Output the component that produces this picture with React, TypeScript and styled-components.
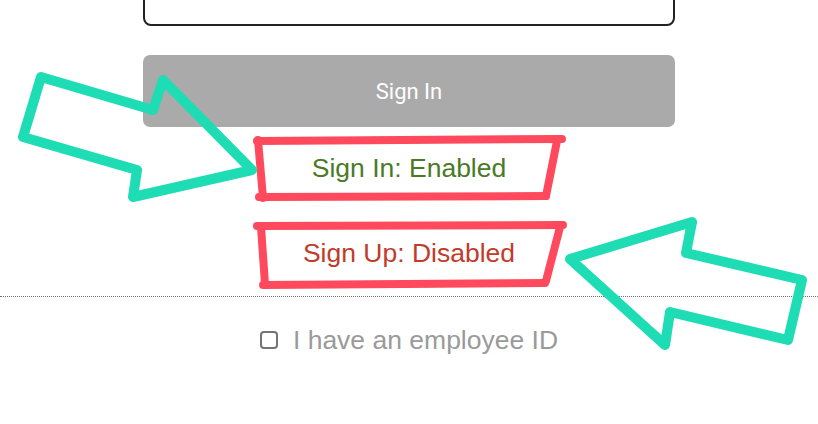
import React from "react";
import styled, { createGlobalStyle } from "styled-components";

const Global = createGlobalStyle`
  html, body { margin: 0; padding: 0; background: #ffffff; }
  body { font-family: "Liberation Sans", Arial, sans-serif; overflow: hidden; }
`;

const Page = styled.div`
  position: relative;
  width: 818px;
  height: 424px;
  overflow: hidden;
  display: flex;
  flex-direction: column;
  background: #fff;
`;

const Column = styled.div`
  width: 532px;
  margin: 0 auto;
  display: flex;
  flex-direction: column;
  align-items: stretch;
`;

const TextInput = styled.input`
  box-sizing: border-box;
  margin: -24px 0 0 0;
  height: 50px;
  width: 100%;
  border: 2px solid #222;
  border-radius: 8px;
  background: #fff;
`;

const SubmitButton = styled.button`
  margin-top: 29px;
  height: 72px;
  border: none;
  border-radius: 7px;
  background: #aaaaaa;
  color: #ffffff;
  font-family: Roboto, "Liberation Sans", sans-serif;
  font-size: 22px;
  cursor: default;
`;

const StatusList = styled.div`
  margin-top: 11px;
  display: flex;
  flex-direction: column;
  gap: 25px;
`;

const Status = styled.div<{ $tone: string }>`
  height: 60px;
  display: flex;
  align-items: center;
  justify-content: center;
  font-family: "Liberation Sans", Arial, sans-serif;
  font-size: 26.5px;
  color: ${(p) => p.$tone};
`;

const Divider = styled.hr`
  margin: 13px 0 0 0;
  border: none;
  border-top: 1px dotted #6f6f6f;
  height: 0;
  width: 100%;
`;

const CheckRow = styled.label`
  margin-top: 23px;
  height: 40px;
  display: flex;
  align-items: center;
  justify-content: center;
  gap: 15px;
  font-family: "Liberation Sans", Arial, sans-serif;
  font-size: 26.5px;
  color: #9a9a9a;
`;

const Box = styled.input`
  appearance: none;
  margin: 0;
  width: 18px;
  height: 18px;
  border: 2px solid #747474;
  border-radius: 4px;
  background: #fff;
  box-sizing: border-box;
`;

const Overlay = styled.svg`
  position: absolute;
  left: 0;
  top: 0;
  pointer-events: none;
`;

const red = "#ff4a5e";
const teal = "#1edcb3";

export default function App() {
  return (
    <>
      <Global />
      <Page>
        <Column>
          <TextInput type="text" />
          <SubmitButton>Sign In</SubmitButton>
          <StatusList>
            <Status $tone="#4b7a26">Sign In: Enabled</Status>
            <Status $tone="#c23b2a">Sign Up: Disabled</Status>
          </StatusList>
        </Column>
        <Divider />
        <Column>
          <CheckRow>
            <Box type="checkbox" />
            I have an employee ID
          </CheckRow>
        </Column>
        <Overlay width="818" height="424" viewBox="0 0 818 424">
          <g fill="none" stroke={red} strokeWidth="8" strokeLinecap="round" strokeLinejoin="round">
            <path d="M257 141 L562 139" />
            <path d="M258 140 L263 198" />
            <path d="M557 141 L546 196" />
            <path d="M259 197 L546 196" />
            <path d="M257 226 L563 225" />
            <path d="M261 227 L265 284" />
            <path d="M560 227 L546 281" />
            <path d="M263 285 L545 283" />
          </g>
          <g fill="none" stroke={teal} strokeWidth="10" strokeLinejoin="round">
            <polygon points="41,77 153,110 163,80 252,170 133,197 137,170 23,137" />
            <polygon points="570,259 692,222 686,253 802,280 788,340 670,312 665,345" />
          </g>
        </Overlay>
      </Page>
    </>
  );
}
